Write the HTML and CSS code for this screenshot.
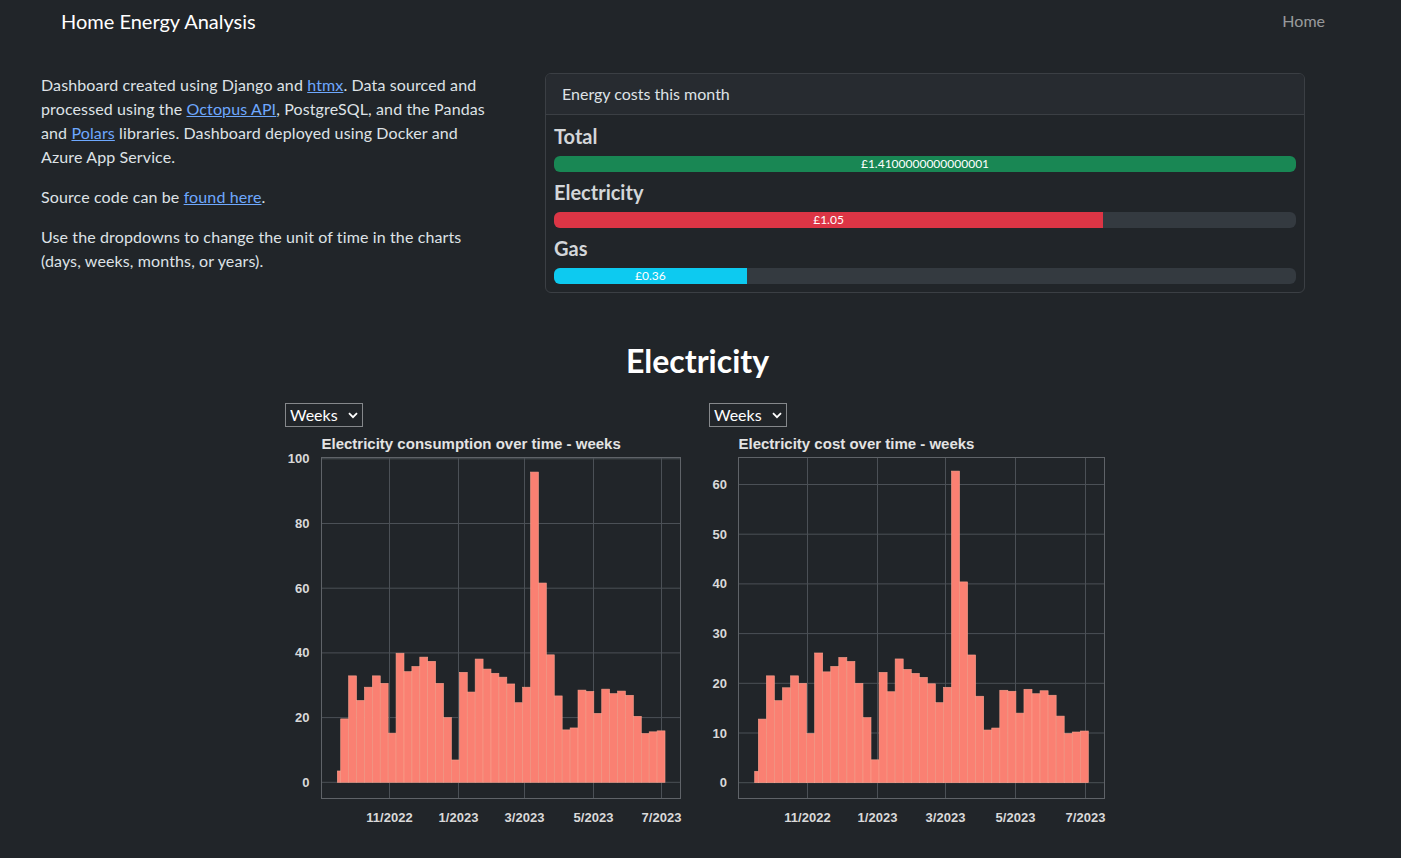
FILE: index.html
```html
<!DOCTYPE html>
<html lang="en">
<head>
<meta charset="utf-8">
<title>Home Energy Analysis</title>
<link rel="stylesheet" href="styles.css">
</head>
<body>
<nav class="navbar">
  <a class="brand" href="#">Home Energy Analysis</a>
  <a class="nav-link" href="#">Home</a>
</nav>
<main class="top">
  <section class="intro">
    <p>Dashboard created using Django and <a href="#">htmx</a>. Data sourced and<br>processed using the <a href="#">Octopus API</a>, PostgreSQL, and the Pandas<br>and <a href="#">Polars</a> libraries. Dashboard deployed using Docker and<br>Azure App Service.</p>
    <p>Source code can be <a href="#">found here</a>.</p>
    <p>Use the dropdowns to change the unit of time in the charts<br>(days, weeks, months, or years).</p>
  </section>
  <section class="card">
    <div class="card-header">Energy costs this month</div>
    <div class="card-body">
      <h5 class="label">Total</h5>
      <div class="progress"><div class="bar bar-green" style="width:100%">£1.4100000000000001</div></div>
      <h5 class="label">Electricity</h5>
      <div class="progress"><div class="bar bar-red" style="width:74%">£1.05</div></div>
      <h5 class="label">Gas</h5>
      <div class="progress"><div class="bar bar-cyan" style="width:26%">£0.36</div></div>
    </div>
  </section>
</main>
<section class="elec">
  <h2 class="section-title">Electricity</h2>
  <div class="charts">
    <div class="chart">
      <div class="select-wrap">
        <select class="unit"><option>Weeks</option><option>Days</option><option>Months</option><option>Years</option></select>
        <svg class="chev" width="10" height="7" viewBox="0 0 10 7"><path d="M1 1.2 L5 5.2 L9 1.2" fill="none" stroke="#fff" stroke-width="1.8"/></svg>
      </div>
      <svg id="chart1" class="plot" width="424" height="400"></svg>
    </div>
    <div class="chart">
      <div class="select-wrap">
        <select class="unit"><option>Weeks</option><option>Days</option><option>Months</option><option>Years</option></select>
        <svg class="chev" width="10" height="7" viewBox="0 0 10 7"><path d="M1 1.2 L5 5.2 L9 1.2" fill="none" stroke="#fff" stroke-width="1.8"/></svg>
      </div>
      <svg id="chart2" class="plot" width="424" height="400"></svg>
    </div>
  </div>
</section>
<script src="script.js"></script>
</body>
</html>
```

FILE: styles.css
```css
html, body {
  margin: 0;
  padding: 0;
  background: #212529;
  color: #dee2e6;
  font-family: Lato, "Noto Sans", sans-serif;
  font-size: 16px;
  line-height: 24px;
}
a { color: #6ea8fe; }

.navbar {
  height: 42px;
  display: flex;
  align-items: center;
  justify-content: space-between;
  padding: 0 76px 0 61px;
}
.brand {
  color: #fff;
  text-decoration: none;
  font-size: 20px;
  line-height: 30px;
}
.nav-link {
  color: rgba(255,255,255,0.55);
  text-decoration: none;
  font-size: 16px;
}

.top {
  display: flex;
  align-items: flex-start;
  margin-top: 31px;
  padding-left: 41px;
}
.intro {
  width: 504px;
  letter-spacing: 0.12px;
}
.intro p {
  margin: 0 0 16px;
}

.card {
  width: 760px;
  box-sizing: border-box;
  border: 1px solid #3b3f44;
  border-radius: 6px;
  overflow: hidden;
}
.card-header {
  padding: 8px 16px;
  background: #272b30;
  border-bottom: 1px solid #3b3f44;
  height: 24px;
}
.card-body {
  padding: 1px 8px 8px;
}
.label {
  margin: 8px 0 8px;
  font-size: 20px;
  line-height: 24px;
  font-weight: 700;
  color: #d3d6d9;
}
.progress {
  height: 16px;
  border-radius: 6px;
  background: #343a40;
  overflow: hidden;
  display: flex;
}
.bar {
  height: 100%;
  color: #fff;
  font-size: 12px;
  line-height: 16px;
  text-align: center;
}
.bar-green { background: #198754; }
.bar-red { background: #dc3545; }
.bar-cyan { background: #0dcaf0; }

.elec {
  margin-top: 49px;
}
.section-title {
  margin: 0;
  text-align: center;
  font-size: 32px;
  line-height: 38px;
  font-weight: 700;
  color: #fff;
  padding-right: 6px;
}
.charts {
  display: flex;
  padding-left: 285px;
  margin-top: 23px;
}
.chart {
  width: 424px;
  display: flex;
  flex-direction: column;
}
.select-wrap {
  position: relative;
  width: 78px;
  height: 24px;
  margin-bottom: 3px;
}
.unit {
  appearance: none;
  -webkit-appearance: none;
  box-sizing: border-box;
  width: 78px;
  height: 24px;
  margin: 0;
  padding: 0 0 0 4px;
  border: 1px solid #85888b;
  border-radius: 0;
  background: #212529;
  color: #fff;
  font-family: Lato, "Noto Sans", sans-serif;
  font-size: 16px;
  line-height: 22px;
}
.chev {
  position: absolute;
  right: 5px;
  top: 9px;
  pointer-events: none;
}
.plot {
  display: block;
  font-family: "Liberation Sans", Arial, sans-serif;
}
```

FILE: script.js
```js
(function () {
  var NS = "http://www.w3.org/2000/svg";
  var consumption = [3.5,19.6,32.9,25.3,29.4,32.9,30.6,15.2,39.9,34.2,35.8,38.7,37.4,30.6,20,6.9,34,27.9,38.1,35,33.7,32.5,30.4,24.6,29.4,95.9,61.6,39.4,26.7,16.2,16.8,28.5,28.1,21.3,28.8,27.4,28.2,26.9,20.4,15.1,15.6,15.9];
  var cost = [2.3,12.8,21.5,16.5,19.1,21.5,20,9.9,26.1,22.3,23.4,25.2,24.4,20,13.1,4.6,22.2,18.3,24.9,22.8,22,21.2,19.9,16.1,19.2,62.7,40.4,25.7,17.4,10.6,11,18.6,18.4,14,18.8,17.9,18.5,17.6,13.4,9.9,10.2,10.4];
  var xlabels = ["11/2022", "1/2023", "3/2023", "5/2023", "7/2023"];

  function el(name, attrs, text) {
    var e = document.createElementNS(NS, name);
    for (var k in attrs) e.setAttribute(k, attrs[k]);
    if (text !== undefined) e.textContent = text;
    return e;
  }

  function draw(id, c) {
    var svg = document.getElementById(id);
    var grid = "#4b5056";
    var axis = "#5f6368";
    c.yticks.forEach(function (v) {
      var y = c.zero - v * c.scale;
      svg.appendChild(el("line", {x1: c.left, x2: c.right, y1: y, y2: y, stroke: grid, "stroke-width": 1}));
      svg.appendChild(el("text", {x: c.ylabelX, y: y + 4.5, "text-anchor": "end", "font-size": 13, "font-weight": 700, fill: "#d9d9d9"}, String(v)));
    });
    c.xgrid.forEach(function (x, i) {
      svg.appendChild(el("line", {x1: x, x2: x, y1: c.top, y2: c.bottom, stroke: grid, "stroke-width": 1}));
      svg.appendChild(el("text", {x: x, y: c.bottom + 23.5, "text-anchor": "middle", "font-size": 13, "font-weight": 700, fill: "#d9d9d9"}, xlabels[i]));
    });
    svg.appendChild(el("rect", {x: c.left, y: c.top, width: c.right - c.left, height: c.bottom - c.top, fill: "none", stroke: axis, "stroke-width": 1}));
    c.data.forEach(function (v, i) {
      var x0, x1;
      if (i === 0) { x0 = c.firstBar[0]; x1 = c.firstBar[1]; }
      else { x0 = c.firstBar[1] + (i - 1) * c.step; x1 = x0 + c.step; }
      var h = v * c.scale;
      svg.appendChild(el("rect", {x: x0, y: c.zero - h, width: x1 - x0, height: h, fill: "#fa8072", stroke: "#f9a08c", "stroke-width": 0.6}));
    });
    svg.appendChild(el("text", {x: c.left, y: 19, "font-size": 15, "font-weight": 700, fill: "#e3e3e3"}, c.title));
  }

  draw("chart1", {
    title: "Electricity consumption over time - weeks",
    left: 36.5, right: 395.5, top: 27.5, bottom: 368.5,
    zero: 352.3, scale: 3.235,
    yticks: [0, 20, 40, 60, 80, 100], ylabelX: 24.5,
    xgrid: [104.5, 173.5, 239.5, 308.5, 376.5],
    firstBar: [52.3, 55.7], step: 7.91,
    data: consumption
  });
  draw("chart2", {
    title: "Electricity cost over time - weeks",
    left: 29.5, right: 395.5, top: 27.5, bottom: 368.5,
    zero: 352.7, scale: 4.97,
    yticks: [0, 10, 20, 30, 40, 50, 60], ylabelX: 18,
    xgrid: [98.5, 168.5, 236.5, 306.5, 376.5],
    firstBar: [45.7, 49.3], step: 8.05,
    data: cost
  });
})();
```
